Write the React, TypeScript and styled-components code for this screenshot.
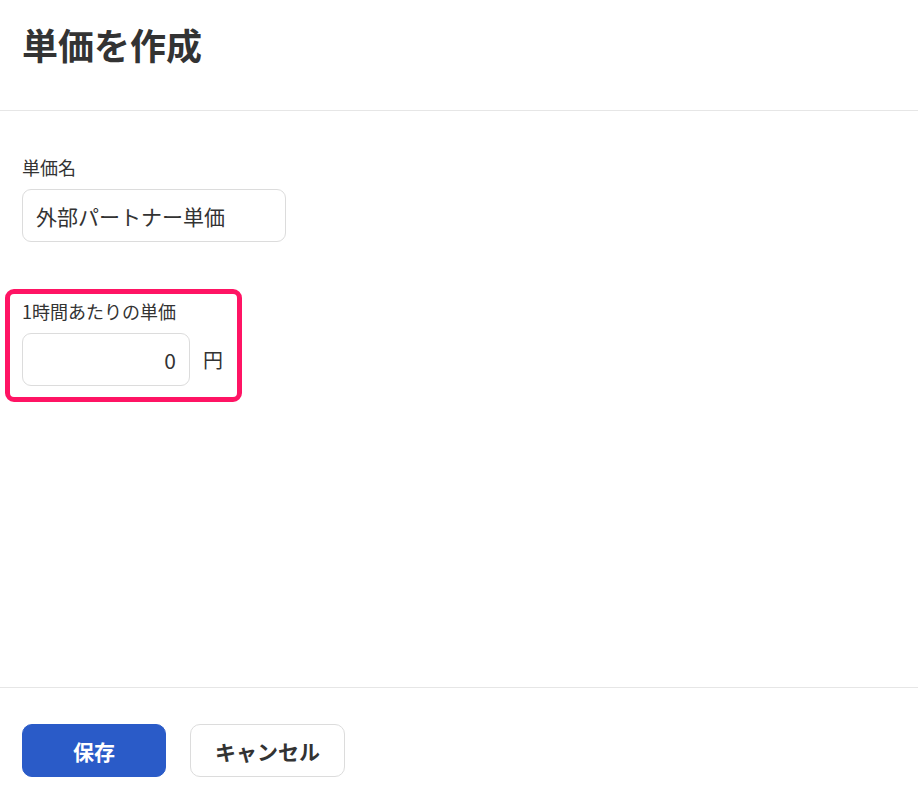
import React from "react";
import styled, { createGlobalStyle } from "styled-components";

const GlobalStyle = createGlobalStyle`
  html, body {
    margin: 0;
    padding: 0;
    background: #ffffff;
  }
  body {
    font-family: "Noto Sans CJK JP", "Noto Sans", sans-serif;
    color: #333333;
  }
  * { box-sizing: border-box; }
`;

const Page = styled.div`
  display: flex;
  flex-direction: column;
  min-height: 100vh;
`;

const Header = styled.header`
  height: 111px;
  padding: 18px 22px 0;
  border-bottom: 1px solid #e6e6e6;
`;

const Title = styled.h1`
  margin: 0;
  font-size: 36px;
  line-height: 52px;
  font-weight: 700;
  color: #333333;
`;

const Main = styled.main`
  flex: 1;
  display: flex;
  flex-direction: column;
  align-items: flex-start;
  gap: 57px;
  padding: 44px 22px 0;
`;

const Field = styled.div<{ $highlight?: boolean }>`
  position: relative;
  display: flex;
  flex-direction: column;
  gap: 9px;

  ${({ $highlight }) =>
    $highlight &&
    `
    &::after {
      content: "";
      position: absolute;
      left: -17px;
      top: -10px;
      right: -19px;
      bottom: -16px;
      border: 5px solid #ff1464;
      border-radius: 9px;
      pointer-events: none;
    }
  `}
`;

const Label = styled.label`
  font-size: 18px;
  line-height: 25px;
  color: #333333;
`;

const InputRow = styled.div`
  display: flex;
  align-items: center;
  gap: 13px;
`;

const TextInput = styled.input<{ $width: number; $align?: "left" | "right" }>`
  width: ${({ $width }) => $width}px;
  height: 53px;
  padding: 0 13px;
  border: 1px solid #dcdcdc;
  border-radius: 9px;
  font-family: inherit;
  font-size: 21px;
  color: #333333;
  text-align: ${({ $align }) => $align ?? "left"};
  background: #ffffff;
  outline: none;
`;

const Unit = styled.span`
  font-size: 20px;
  color: #333333;
`;

const Footer = styled.footer`
  display: flex;
  gap: 24px;
  padding: 36px 22px 23px;
  border-top: 1px solid #e6e6e6;
`;

const Button = styled.button<{ $primary?: boolean; $width: number }>`
  width: ${({ $width }) => $width}px;
  height: 53px;
  border-radius: 10px;
  font-family: inherit;
  font-size: 21px;
  font-weight: 700;
  cursor: pointer;
  border: 1px solid ${({ $primary }) => ($primary ? "#2a5bc8" : "#dcdcdc")};
  background: ${({ $primary }) => ($primary ? "#2a5bc8" : "#ffffff")};
  color: ${({ $primary }) => ($primary ? "#ffffff" : "#333333")};
`;

export default function App() {
  return (
    <Page>
      <GlobalStyle />
      <Header>
        <Title>単価を作成</Title>
      </Header>
      <Main>
        <Field>
          <Label>単価名</Label>
          <TextInput $width={264} defaultValue="外部パートナー単価" />
        </Field>
        <Field $highlight>
          <Label>1時間あたりの単価</Label>
          <InputRow>
            <TextInput $width={168} $align="right" defaultValue="0" />
            <Unit>円</Unit>
          </InputRow>
        </Field>
      </Main>
      <Footer>
        <Button $primary $width={144}>保存</Button>
        <Button $width={155}>キャンセル</Button>
      </Footer>
    </Page>
  );
}
